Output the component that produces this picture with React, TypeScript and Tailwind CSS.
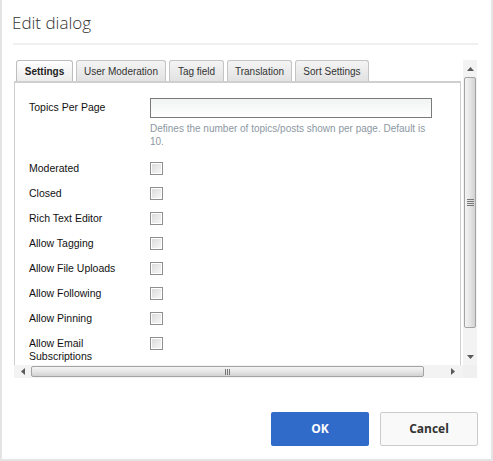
import React from "react";

const tabs = [
  { label: "Settings", w: "w-[57px]" },
  { label: "User Moderation", w: "w-[90px]" },
  { label: "Tag field", w: "w-[55px]" },
  { label: "Translation", w: "w-[65px]" },
  { label: "Sort Settings", w: "w-[74px]" },
];

const checkRows = [
  "Moderated",
  "Closed",
  "Rich Text Editor",
  "Allow Tagging",
  "Allow File Uploads",
  "Allow Following",
  "Allow Pinning",
  "Allow Email Subscriptions",
];

function Checkbox() {
  return (
    <span className="block h-[13px] w-[13px] shrink-0 border border-[#8f8f8f] bg-white p-[1px]">
      <span className="block h-full w-full bg-gradient-to-br from-[#dcdcdc] to-[#f6f6f6]" />
    </span>
  );
}

function Arrow({ dir }: { dir: "up" | "down" | "left" | "right" }) {
  const pts = {
    up: "0,4 7,4 3.5,0",
    down: "0,0 7,0 3.5,4",
    left: "4,0 4,7 0,3.5",
    right: "0,0 0,7 4,3.5",
  }[dir];
  const vertical = dir === "up" || dir === "down";
  return (
    <svg width={vertical ? 7 : 4} height={vertical ? 4 : 7} viewBox={vertical ? "0 0 7 4" : "0 0 4 7"}>
      <polygon points={pts} fill="#5a5a5a" />
    </svg>
  );
}

function VScrollbar() {
  return (
    <div className="flex h-full flex-col bg-[#f3f3f3]">
      <div className="flex h-[17px] items-center justify-center">
        <Arrow dir="up" />
      </div>
      <div className="mx-[1px] flex h-[251px] items-center justify-center rounded-[2px] border border-[#a3a3a3] bg-gradient-to-r from-[#f4f4f4] via-[#e6e6e6] to-[#d2d2d2]">
        <div className="flex flex-col gap-[1px]">
          <span className="block h-[1px] w-[7px] bg-[#777]" />
          <span className="block h-[1px] w-[7px] bg-[#777]" />
          <span className="block h-[1px] w-[7px] bg-[#777]" />
          <span className="block h-[1px] w-[7px] bg-[#777]" />
        </div>
      </div>
      <div className="flex flex-1 items-end justify-center pb-[6px]">
        <Arrow dir="down" />
      </div>
    </div>
  );
}

function HScrollbar() {
  return (
    <div className="flex h-full items-stretch bg-[#f3f3f3]">
      <div className="flex w-[17px] items-center justify-center">
        <Arrow dir="left" />
      </div>
      <div className="my-[1px] flex w-[393px] items-center justify-center rounded-[2px] border border-[#a3a3a3] bg-gradient-to-b from-[#f4f4f4] via-[#e6e6e6] to-[#d2d2d2]">
        <div className="flex gap-[1px]">
          <span className="block h-[6px] w-[1px] bg-[#777]" />
          <span className="block h-[6px] w-[1px] bg-[#777]" />
          <span className="block h-[6px] w-[1px] bg-[#777]" />
        </div>
      </div>
      <div className="flex flex-1 items-center justify-end pr-[8px]">
        <Arrow dir="right" />
      </div>
    </div>
  );
}

export default function App() {
  return (
    <div
      className="flex h-[461px] w-[493px] flex-col border-x-2 border-b-2 border-[#e4e4e4] bg-white"
      style={{ fontFamily: "'Liberation Sans', Arial, sans-serif" }}
    >
      <div className="px-[10px] pt-[11px]">
        <h1 className="text-[17px] font-light leading-[24px] text-[#333]" style={{ fontFamily: "'Open Sans', sans-serif" }}>
          Edit dialog
        </h1>
        <div className="mt-[8px] mr-[3px] ml-[1px] h-[2px] bg-[#efefef]" />
      </div>

      <div className="mt-[15px] ml-[12px] grid h-[318px] w-[463px] grid-cols-[449px_14px] grid-rows-[305px_13px]">
        <div className="flex flex-col overflow-hidden">
          <div className="flex h-[21px] items-end gap-[3px] pl-[2px]">
            {tabs.map((t, i) => (
              <div
                key={t.label}
                className={
                  i === 0
                    ? `flex h-[21px] ${t.w} items-center justify-center rounded-t-[3px] border border-b-0 border-[#bdbdbd] bg-gradient-to-b from-[#ffffff] to-[#ececec] text-[10px] font-bold text-[#222]`
                    : `flex h-[21px] ${t.w} items-center justify-center rounded-t-[3px] border border-b-0 border-[#c4c4c4] bg-gradient-to-b from-[#f4f4f4] to-[#e2e2e2] text-[10px] text-[#333]`
                }
              >
                {t.label}
              </div>
            ))}
          </div>
          <div className="mr-[2px] flex-1 border-t-2 border-l border-r border-[#cfcfcf] pt-[15px] pl-[14px] text-[10.5px] text-[#111]">
            <div className="flex">
              <div className="w-[121px] pt-[3px] leading-[13px]">Topics Per Page</div>
              <div className="w-[282px]">
                <div className="h-[20px] border border-[#7a7a7a] bg-gradient-to-b from-[#f1f3f3] to-white" />
                <p className="mt-[4px] text-[10px] leading-[13px] text-[#8d98a3]">
                  Defines the number of topics/posts shown per page. Default is 10.
                </p>
              </div>
            </div>
            <div className="mt-[8px] flex flex-col">
              {checkRows.map((r) => (
                <div key={r} className="flex h-[25px] items-start pt-[6px]">
                  <div className="w-[121px] pr-[20px] leading-[13px]">{r}</div>
                  <Checkbox />
                </div>
              ))}
            </div>
          </div>
        </div>
        <VScrollbar />
        <HScrollbar />
        <div className="bg-[#f0f0f0]" />
      </div>

      <div className="mt-[34px] flex justify-end gap-[11px] pr-[13px]" style={{ fontFamily: "'Open Sans', sans-serif" }}>
        <button className="h-[34px] w-[98px] rounded-[2px] bg-[#316bc9] text-[12px] font-bold text-white">OK</button>
        <button className="h-[34px] w-[98px] rounded-[2px] border border-[#cccccc] bg-[#f9f9f9] text-[12px] font-bold text-[#333]">
          Cancel
        </button>
      </div>
    </div>
  );
}
